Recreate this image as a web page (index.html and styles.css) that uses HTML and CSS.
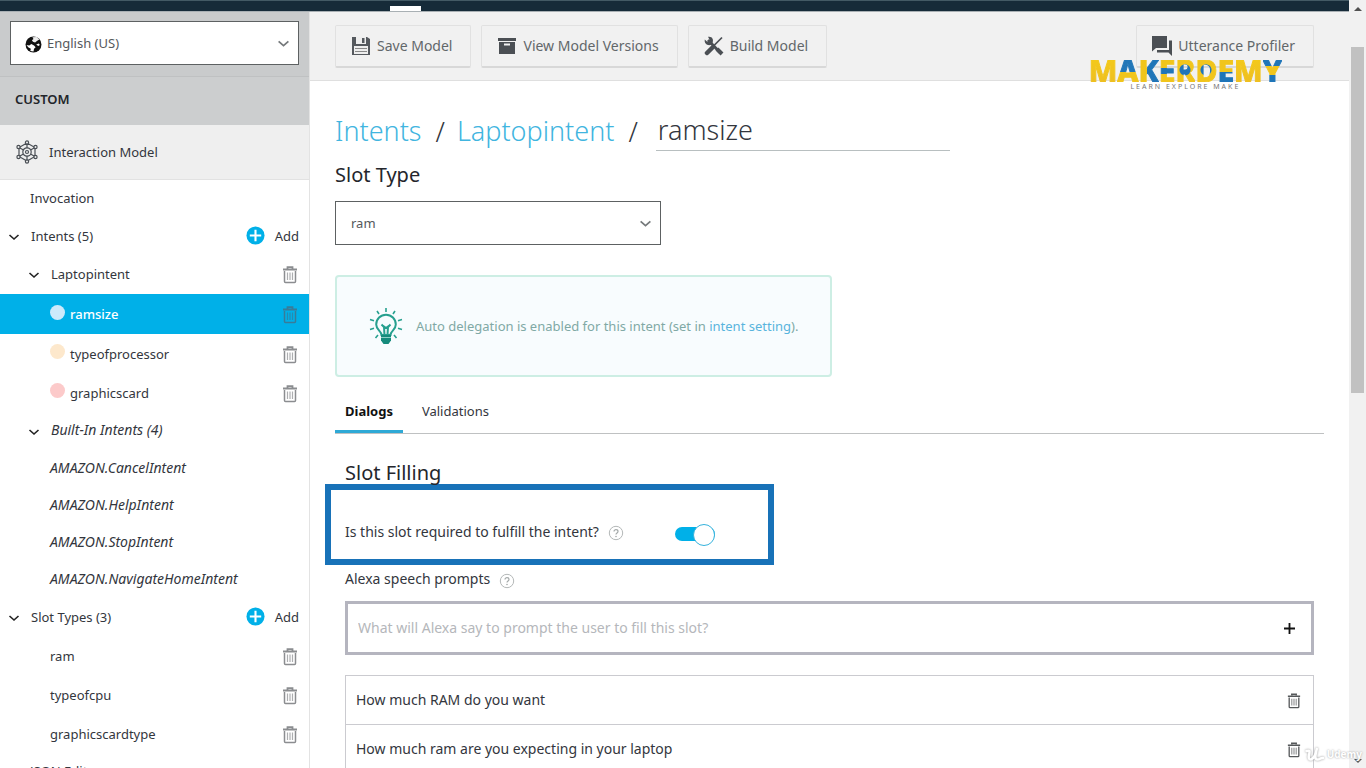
FILE: index.html
```html
<!DOCTYPE html>
<html lang="en">
<head>
<meta charset="utf-8">
<title>Alexa Developer Console</title>
<link rel="stylesheet" href="styles.css">
</head>
<body>
<svg class="symbols" aria-hidden="true">
  <symbol id="trash" viewBox="0 0 16 18">
    <path d="M5.500 2.500V1.200h5v1.300M1 3.500h14" fill="none" stroke="currentColor" stroke-width="1.800"/>
    <path d="M2.500 5v10.500q0 1 1 1h9q1 0 1-1V5" fill="none" stroke="currentColor" stroke-width="1.500"/>
    <path d="M5.500 6.500v7.500M8 6.500v7.500M10.500 6.500v7.500" stroke="currentColor" stroke-width="1.200" opacity=".7"/>
  </symbol>
  <symbol id="chevron" viewBox="0 0 12 12">
    <path d="M1.500 4l4.500 4 4.500-4" fill="none" stroke="currentColor" stroke-width="1.600"/>
  </symbol>
  <symbol id="plus" viewBox="0 0 20 20">
    <circle cx="10" cy="10" r="9.500" fill="#00b0e8"/>
    <path d="M10 4v12M4 10h12" stroke="#fff" stroke-width="2.200"/>
  </symbol>
  <symbol id="help" viewBox="0 0 16 16">
    <circle cx="8" cy="8" r="6.700" fill="none" stroke="#b4b8b8"/>
    <path d="M6 6.600c0-2.600 4-2.500 4-.1 0 1.400-2 1.500-2 3" fill="none" stroke="#a4a9a9" stroke-width="1.200"/>
    <circle cx="8" cy="11.500" r=".8" fill="#a4a9a9"/>
  </symbol>
</svg>

<div class="app">
  <header class="topbar"><span class="active-tab"></span></header>
  <nav class="sidebar">
    <div class="language">
      <div class="select-wrap">
        <svg class="globe" viewBox="0 0 16 16" aria-hidden="true">
          <circle cx="8" cy="8" r="7.500" fill="#111"/>
          <path d="M7 1.200l4-.2 2.500 2.200-2 1.300L9.500 6 7.500 5.500 6.500 4 8 2.800z" fill="#eee"/>
          <path d="M1.500 8.500L4 9l2-1.500L8.500 9l1.500 1.500-1.500 1.500-.5 2.500-3-.5.5-2L3 10.500z" fill="#fff"/>
          <path d="M10.500 8l2.500-1 1 1.500-1.500 1z" fill="#fff"/>
        </svg>
        <select class="select select-language" aria-label="Language"><option>English (US)</option></select>
        <svg class="select-arrow" aria-hidden="true"><use href="#chevron"/></svg>
      </div>
    </div>
    <h2 class="section">CUSTOM</h2>
    <a class="model" href="#model">
      <svg class="model-icon" viewBox="0 0 24 24" fill="none" stroke="#4a4f55" stroke-width="1.200" aria-hidden="true">
        <path d="M12 3l8 4.500v9L12 21l-8-4.500v-9zM12 3v5M4 7.500l4.500 2.500M20 7.500L15.500 10M4 16.500L8.500 14M20 16.500L15.500 14M12 16v5"/>
        <circle cx="12" cy="12" r="4.200"/><circle cx="12" cy="12" r="1.500"/>
        <g fill="#eee"><circle cx="12" cy="2.500" r="1.600"/><circle cx="3.500" cy="7" r="1.600"/><circle cx="20.500" cy="7" r="1.600"/><circle cx="3.500" cy="17" r="1.600"/><circle cx="20.500" cy="17" r="1.600"/><circle cx="12" cy="21.500" r="1.600"/></g>
      </svg>
      Interaction Model
    </a>
    <div class="tree">
      <div class="row leaf top"><a href="#invocation">Invocation</a></div>
      <div class="row group">
        <svg class="twisty"><use href="#chevron"/></svg><a href="#intents">Intents (5)</a>
        <button class="add"><svg class="plus"><use href="#plus"/></svg>Add</button>
      </div>
      <div class="row slot nested">
        <svg class="twisty"><use href="#chevron"/></svg><a href="#laptopintent">Laptopintent</a>
        <button class="delete" aria-label="Delete Laptopintent"><svg class="trash"><use href="#trash"/></svg></button>
      </div>
      <div class="row slot child selected">
        <span class="dot dot-blue"></span><a href="#ramsize">ramsize</a>
        <button class="delete" aria-label="Delete ramsize"><svg class="trash"><use href="#trash"/></svg></button>
      </div>
      <div class="row slot child">
        <span class="dot dot-orange"></span><a href="#typeofprocessor">typeofprocessor</a>
        <button class="delete" aria-label="Delete typeofprocessor"><svg class="trash"><use href="#trash"/></svg></button>
      </div>
      <div class="row slot child">
        <span class="dot dot-red"></span><a href="#graphicscard">graphicscard</a>
        <button class="delete" aria-label="Delete graphicscard"><svg class="trash"><use href="#trash"/></svg></button>
      </div>
      <div class="row group nested builtin"><svg class="twisty"><use href="#chevron"/></svg><a href="#builtin">Built-In Intents (4)</a></div>
      <div class="row leaf child builtin"><a href="#cancel">AMAZON.CancelIntent</a></div>
      <div class="row leaf child builtin"><a href="#help-intent">AMAZON.HelpIntent</a></div>
      <div class="row leaf child builtin"><a href="#stop">AMAZON.StopIntent</a></div>
      <div class="row leaf child builtin"><a href="#home">AMAZON.NavigateHomeIntent</a></div>
      <div class="row group">
        <svg class="twisty"><use href="#chevron"/></svg><a href="#slots">Slot Types (3)</a>
        <button class="add"><svg class="plus"><use href="#plus"/></svg>Add</button>
      </div>
      <div class="row slot child"><a href="#ram">ram</a><button class="delete" aria-label="Delete ram"><svg class="trash"><use href="#trash"/></svg></button></div>
      <div class="row slot child"><a href="#typeofcpu">typeofcpu</a><button class="delete" aria-label="Delete typeofcpu"><svg class="trash"><use href="#trash"/></svg></button></div>
      <div class="row slot child"><a href="#graphicscardtype">graphicscardtype</a><button class="delete" aria-label="Delete graphicscardtype"><svg class="trash"><use href="#trash"/></svg></button></div>
      <div class="row leaf top"><a href="#json">JSON Editor</a></div>
    </div>
  </nav>

  <main class="main">
    <div class="toolbar">
      <button class="tool">
        <svg class="tool-icon" viewBox="0 0 20 20"><path d="M1 1h15l3 2v16H1z" fill="#55595e"/><path d="M5 1h10v7H5z" fill="#eee"/><path d="M11 2h2.500v5H11z" fill="#55595e"/><path d="M3 10h14v8H3z" fill="#eee"/><path d="M4 12.500h12M4 15.500h12" stroke="#888" stroke-width="1"/></svg>
        Save Model
      </button>
      <button class="tool">
        <svg class="tool-icon" viewBox="0 0 20 20"><path d="M1 2h18v3H1zM2 6h16v12H2z" fill="#4b4f54"/><path d="M7 8.500h6" stroke="#f1f1f1" stroke-width="2"/></svg>
        View Model Versions
      </button>
      <button class="tool">
        <svg class="tool-icon" viewBox="0 0 20 20"><path d="M4 4l12.500 13" stroke="#4b4f54" stroke-width="3"/><path d="M18 1.500L8.500 11" stroke="#4b4f54" stroke-width="1.700"/><path d="M8 12L3 17" stroke="#4b4f54" stroke-width="4.500" stroke-linecap="round"/><path d="M4 .8c4-.8 6 2.500 4.500 6L6.500 9C3 9.800 0 7 .8 3.500L3.500 6l2.200-2z" fill="#4b4f54"/><path d="M13 13l5 5" stroke="#4b4f54" stroke-width="4"/></svg>
        Build Model
      </button>
      <button class="tool tool-end">
        <svg class="tool-icon" viewBox="0 0 20 20"><path d="M0 0h15v12H4l-4 3.500z" fill="#4b4f54"/><path d="M17 4.500h3V20l-3.500-3.500H5v-2.500h12z" fill="#4b4f54"/></svg>
        Utterance Profiler
      </button>
    </div>

    <div class="content">
      <div class="breadcrumb">
        <a href="#intents">Intents</a><span class="slash">/</span><a href="#laptopintent">Laptopintent</a><span class="slash">/</span>
        <input class="slot-name" type="text" value="ramsize" aria-label="Slot name">
      </div>
      <label class="heading" for="slot-type">Slot Type</label>
      <div class="select-wrap slot-type-wrap">
        <select class="select" id="slot-type"><option>ram</option></select>
        <svg class="select-arrow" aria-hidden="true"><use href="#chevron"/></svg>
      </div>
      <div class="notice">
        <svg class="bulb" viewBox="0 0 34 38" fill="none" stroke="#27a08f" stroke-width="1.600" aria-hidden="true">
          <path d="M17 1v4M8 4l2 3M26 4l-2 3M1 12.500l4 1.200M33 12.500l-4 1.200M1 22.500l4-1.200M33 22.500l-4-1.200M6.500 31l2.500-3M27.500 31L25 28"/>
          <path d="M12.500 28c0-4-5.300-5-5.300-10.500a9.800 9.800 0 0 1 19.600 0C26.800 23 21.500 24 21.500 28z" stroke-width="2"/>
          <path d="M15.500 28l-.5-8-2.500-2.500M18.500 28l.5-8 2.500-2.500M13 18l4 3 4-3" stroke-width="2"/>
          <path d="M12 28h10v5.500L19.500 37h-5L12 33.500z" fill="#168b7c" stroke="none"/>
          <path d="M12 30.500h10" stroke="#8cd0c6" stroke-width="1"/>
        </svg>
        <p class="notice-text">Auto delegation is enabled for this intent (set in <a href="#settings">intent setting</a>).</p>
      </div>
      <div class="tabs" role="tablist">
        <button class="tab tab-active" role="tab" aria-selected="true">Dialogs</button>
        <button class="tab" role="tab" aria-selected="false">Validations</button>
      </div>
      <section class="panel">
        <h3 class="heading panel-heading">Slot Filling</h3>
        <div class="required">
          <label for="required">Is this slot required to fulfill the intent?</label>
          <svg class="help"><use href="#help"/></svg>
          <input class="switch" id="required" type="checkbox" checked>
        </div>
        <div class="prompts-label"><label for="prompt">Alexa speech prompts</label><svg class="help"><use href="#help"/></svg></div>
        <div class="prompt-box">
          <input class="prompt-input" id="prompt" type="text" placeholder="What will Alexa say to prompt the user to fill this slot?">
          <button class="prompt-add" aria-label="Add prompt"><svg class="prompt-plus" viewBox="0 0 12 12"><path d="M6 0v12M0 6h12" stroke="#111" stroke-width="2"/></svg></button>
        </div>
        <ul class="prompt-list">
          <li class="prompt">How much RAM do you want<button class="delete" aria-label="Delete prompt"><svg class="trash trash-dark"><use href="#trash"/></svg></button></li>
          <li class="prompt">How much ram are you expecting in your laptop<button class="delete" aria-label="Delete prompt"><svg class="trash trash-dark"><use href="#trash"/></svg></button></li>
        </ul>
      </section>
    </div>
  </main>

  <div class="scrollbar" aria-hidden="true">
    <span class="arrow arrow-up"></span><span class="thumb"></span><span class="arrow arrow-down"></span>
  </div>

  <div class="brand">
    <div class="brand-name"><span class="b-m">M</span><span class="b-a">A</span><span class="b-k">K</span><span class="b-e">E</span><span class="b-r">R</span><span class="b-d">D</span><span class="b-e2">E</span><span class="b-m">M</span><span class="b-y">Y</span></div>
    <div class="brand-tag">LEARN EXPLORE MAKE</div>
  </div>
  <div class="watermark">
    <svg class="watermark-icon" viewBox="0 0 20 16" fill="none" stroke="#fff" stroke-width="2.500" stroke-linecap="round"><path d="M1.500 5C5 4 5 5 4 9s1 6 4 3 3-7 4-10c-1 4-3 11 0 11.500 3 .5 3-2 6-1.500"/></svg>
    <span>Udemy</span>
  </div>
</div>
</body>
</html>
```
FILE: styles.css
```css
* { box-sizing: border-box; }
body {
  margin: 0;
  font: 13px/20px "Noto Sans", "Open Sans", sans-serif;
  color: #33363d;
  background: #fff;
}
a { color: inherit; text-decoration: none; }
button, input, select { font: inherit; color: inherit; }
button { border: 0; padding: 0; background: none; }
svg { flex: none; display: block; }
.symbols { position: absolute; width: 0; height: 0; }

.app {
  position: relative;
  display: grid;
  grid-template: 12px minmax(0, 1fr) / 310px minmax(0, 1fr) 17px;
  height: 100vh;
  overflow: hidden;
}
.topbar {
  grid-column: 1 / 3;
  display: flex;
  align-items: flex-end;
  padding-left: 390px;
  background: #162b39;
  border-top: 1px solid #435a65;
  border-bottom: 1px solid #a9b0b4;
}
.active-tab { width: 31px; height: 5px; background: #fff; }

.sidebar { grid-area: 2 / 1; overflow: hidden; border-right: 1px solid #e3e3e3; }
.language { padding: 9px 10px 11px; background: #c9cbcc; border-bottom: 1px solid #bfc1c2; }
.select-wrap { position: relative; }
.select {
  display: block;
  width: 100%;
  height: 44px;
  padding: 0 32px 0 15px;
  appearance: none;
  background: #fff;
  border: 1px solid #5d6162;
  border-radius: 0;
  color: #55595c;
}
.select-language { padding-left: 36px; }
.globe { position: absolute; left: 15px; top: 15px; width: 17px; height: 17px; }
.select-arrow { position: absolute; right: 9px; top: 16px; width: 13px; height: 13px; color: #75797b; pointer-events: none; }
.section {
  margin: 0;
  padding: 12px 15px 16px;
  font-size: 13px;
  line-height: 20px;
  font-weight: 600;
  color: #22252a;
  background: #cccecf;
}
.model {
  display: flex;
  align-items: center;
  gap: 10px;
  height: 55px;
  padding-left: 15px;
  background: #efefef;
  border-bottom: 1px solid #e2e2e2;
}
.model-icon { width: 24px; height: 24px; }

.row { display: flex; align-items: center; padding-right: 10px; }
.leaf { height: 37px; padding-bottom: 2px; }
.group { height: 38px; padding-left: 8px; padding-bottom: 1px; }
.slot { height: 39px; }
.top { padding-left: 30px; }
.nested { padding-left: 28px; padding-bottom: 2px; }
.child { padding-left: 50px; }
.builtin { font-size: 14px; font-style: italic; }
.twisty { width: 12px; height: 12px; margin: 3px 11px 0 0; color: #222; }
.add { display: flex; align-items: center; gap: 10px; margin-left: auto; }
.plus { width: 19px; height: 19px; }
.delete { margin-left: auto; padding: 2px 1px 0; color: #8b8d90; }
.trash { width: 16px; height: 18px; }
.trash-dark { width: 14px; height: 16px; color: #55585a; }
.dot { width: 15px; height: 15px; margin: 0 5px 4px 0; border-radius: 50%; }
.dot-blue { background: #cdeafb; }
.dot-orange { background: #fde8cc; }
.dot-red { background: #fccaca; }
.selected { height: 40px; background: #00b0e8; color: #fff; font-weight: 500; }
.selected .delete { color: #397b98; }

.main { grid-area: 2 / 2; overflow: hidden; }
.toolbar {
  display: flex;
  gap: 10px;
  padding: 13px 35px 12px 25px;
  background: #f1f1f1;
  border-bottom: 1px solid #dfdfdf;
}
.tool {
  display: flex;
  align-items: center;
  gap: 6px;
  height: 43px;
  padding: 0 18px 0 15px;
  font-size: 14px;
  color: #62676a;
  border: 1px solid #e1e1e1;
  border-bottom: 2px solid #d8d8d8;
  border-radius: 2px;
}
.tool-icon { width: 20px; height: 20px; }
.tool-end { margin-left: auto; }

.content { padding: 32px 25px 0; }
.breadcrumb { display: flex; align-items: center; font-size: 27px; line-height: 36px; font-weight: 300; }
.breadcrumb a { padding-bottom: 2px; color: #41b5df; }
.slash { margin: 0 12px 0 14px; }
.slot-name {
  width: 294px;
  height: 38px;
  margin-left: 6px;
  padding: 0 2px 4px;
  border: 0;
  border-bottom: 1px solid #b8bfc0;
  background: none;
}
.heading { display: block; margin: 11px 0 0; font-size: 20px; line-height: 26px; font-weight: 400; color: #24262c; }
.slot-type-wrap { width: 326px; margin-top: 13px; }
.notice {
  display: flex;
  align-items: center;
  gap: 13px;
  width: 497px;
  max-width: 100%;
  height: 102px;
  margin-top: 30px;
  padding-left: 32px;
  background: #f8fcfe;
  border: 2px solid #cdeee4;
  border-radius: 4px;
  color: #80a9a5;
}
.notice-text { margin: 0; }
.notice-text a { color: #58b4dd; }
.bulb { width: 34px; height: 38px; }
.tabs { display: flex; gap: 9px; margin-top: 20px; border-bottom: 1px solid #bfc1c2; }
.tab { height: 36px; padding: 0 10px 6px; border-bottom: 3px solid transparent; }
.tab-active { font-weight: 700; color: #111; border-color: #2fa9d6; }

.panel { padding: 0 10px; font-size: 14px; }
.panel-heading { margin-top: 26px; }
.required {
  display: flex;
  align-items: center;
  height: 81px;
  margin: -2px 0 0 -20px;
  padding: 14px 53px 0 14px;
  width: 449px;
  border: 6px solid #1872b8;
}
.help { width: 16px; height: 16px; margin: 3px 0 0 9px; }
.switch {
  position: relative;
  width: 40px;
  height: 14px;
  margin: 4px 0 0 auto;
  appearance: none;
  border-radius: 7px;
  background: #00b0e8;
}
.switch::after {
  content: "";
  position: absolute;
  right: 0;
  top: -3px;
  width: 20px;
  height: 20px;
  border: 1px solid #35b2dc;
  border-radius: 50%;
  background: #fff;
}
.prompts-label { display: flex; align-items: center; height: 28px; }
.prompt-box { display: flex; align-items: center; height: 54px; margin-top: 8px; border: 3px solid #b5b5bf; }
.prompt-input { flex: 1; min-width: 0; border: 0; padding: 0 10px; outline: 0; }
.prompt-input::placeholder { color: #b5b7bb; opacity: 1; }
.prompt-add { padding: 16px; }
.prompt-plus { width: 11px; height: 11px; }
.prompt-list { list-style: none; margin: 20px 0 0; padding: 0; border: 1px solid #cbcbd0; }
.prompt { display: flex; align-items: center; height: 49px; padding: 0 11px 0 10px; border-bottom: 1px solid #cbcbd0; }

.scrollbar {
  grid-area: 1 / 3 / 3 / 4;
  display: flex;
  flex-direction: column;
  align-items: center;
  padding: 7px 0 5px;
  background: #f1f1f1;
}
.arrow { border: 4px solid transparent; }
.arrow-up { border-top: 0; border-bottom-color: #505050; }
.arrow-down { margin-top: auto; border-bottom: 0; border-top-color: #505050; }
.thumb { width: 13px; height: 346px; margin-top: 36px; background: #c1c1c1; }

.brand { position: absolute; right: 84px; top: 60px; text-align: center; }
.brand-name {
  display: flex;
  font: 800 30px/22px "Noto Sans", sans-serif;
  color: transparent;
  -webkit-text-stroke: 1px transparent;
}
.brand-name span { background-clip: text; -webkit-background-clip: text; }
.b-m { background-image: linear-gradient(#f3c91a, #eebf20); }
.b-a { background-image: linear-gradient(#2277b8 55%, #f1c51c 55%); }
.b-k { background-image: linear-gradient(90deg, #f1c51c 38%, #1f75b8 38%); }
.b-e { background-image: linear-gradient(#f1c51c 35%, #1f75b8 35% 65%, #f1c51c 65%); }
.b-r, .b-d { background-image: radial-gradient(circle at 50% 45%, #1f75b8 5px, #f1c51c 6px); }
.b-e2 { background-image: linear-gradient(#f1c51c 55%, #1f75b8 55%); }
.b-y { background-image: linear-gradient(#1f75b8 28%, #f1c51c 28% 70%, #1f75b8 70%); }
.brand-tag { font-size: 7px; line-height: 10px; letter-spacing: 2px; color: #777; }
.watermark {
  position: absolute;
  right: 4px;
  bottom: 6px;
  display: flex;
  align-items: center;
  gap: 2px;
  font-size: 10px;
  line-height: 16px;
  font-weight: 700;
  color: #fff;
  text-shadow: 0 0 2px #999;
}
.watermark-icon { width: 20px; height: 16px; filter: drop-shadow(0 0 1px #999); }
```
